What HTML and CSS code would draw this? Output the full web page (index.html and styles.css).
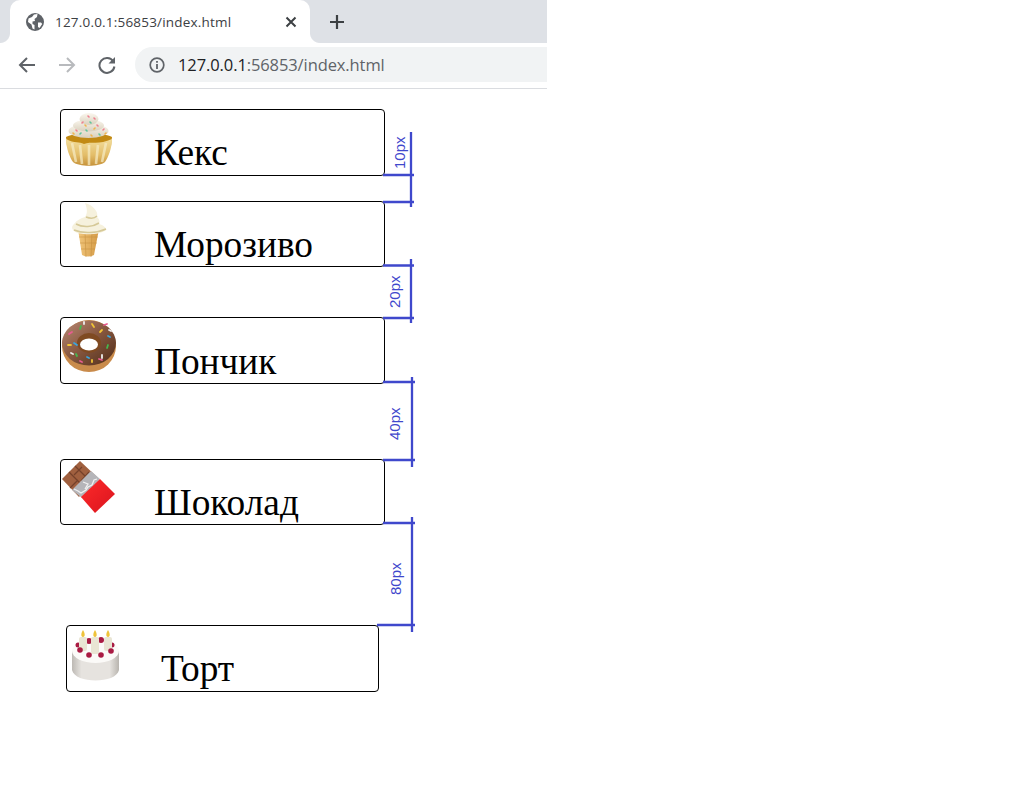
FILE: index.html
```html
<!DOCTYPE html>
<html lang="uk">
<head>
<meta charset="utf-8">
<title>index.html</title>
<link rel="stylesheet" href="styles.css">
</head>
<body>
<div class="page">
  <header class="browser">
    <div class="tabstrip">
      <div class="tab">
        <svg class="globe" width="18" height="18" viewBox="0 0 18 18"><circle cx="9" cy="9" r="9" fill="#5f6368"/><path d="M2.5 5.5 L6 4 L8 1.5 L11.5 1 L11 4 L8.5 6 L9 8 L6.5 8.5 L6.5 11 L8.5 12 L8.5 16.5 L6.5 15.5 L5.5 11.5 L2 9 Z M12 9.5 L15 9.5 L16.2 11 L13.5 15 L12 14 Z" fill="#fff"/></svg>
        <span class="tab-title">127.0.0.1:56853/index.html</span>
        <svg class="close" width="12" height="12" viewBox="0 0 12 12"><path d="M1.5 1.5 L10.5 10.5 M10.5 1.5 L1.5 10.5" stroke="#3c4043" stroke-width="2"/></svg>
      </div>
      <svg class="newtab" width="16" height="16" viewBox="0 0 16 16"><path d="M8 1 V15 M1 8 H15" stroke="#3c4043" stroke-width="2.2"/></svg>
    </div>
    <div class="toolbar">
      <svg class="nav" width="18" height="18" viewBox="0 0 18 18"><path d="M17 9 H2 M9 2 L2 9 L9 16" fill="none" stroke="#5f6368" stroke-width="2"/></svg>
      <svg class="nav nav-fwd" width="18" height="18" viewBox="0 0 18 18"><path d="M1 9 H16 M9 2 L16 9 L9 16" fill="none" stroke="#b8babd" stroke-width="2"/></svg>
      <svg class="nav nav-reload" width="18" height="18" viewBox="0 0 18 18"><path d="M15.2 5.2 A7.5 7.5 0 1 0 16.4 10.5" fill="none" stroke="#5f6368" stroke-width="2"/><path d="M17 1 V7.5 H10.5 Z" fill="#5f6368"/></svg>
      <div class="omnibox">
        <svg class="info" width="16" height="16" viewBox="0 0 16 16"><circle cx="8" cy="8" r="6.8" fill="none" stroke="#5f6368" stroke-width="1.7"/><path d="M8 7 V12 M8 4 V5.8" stroke="#5f6368" stroke-width="1.8"/></svg>
        <span class="url"><span class="url-host">127.0.0.1</span>:56853/index.html</span>
      </div>
    </div>
  </header>

  <main class="list">
    <div class="card card-a">
      <svg class="emoji" viewBox="0 0 64 65" width="64" height="65">
        <defs>
          <linearGradient id="wrap" x1="0" y1="0" x2="0" y2="1"><stop offset="0" stop-color="#f2dd9c"/><stop offset=".6" stop-color="#e3bd68"/><stop offset="1" stop-color="#c6923a"/></linearGradient>
          <linearGradient id="frost" x1="0" y1="0" x2="0" y2="1"><stop offset="0" stop-color="#fbf7ee"/><stop offset="1" stop-color="#d9d0bd"/></linearGradient>
        </defs>
        <path d="M5 27 C16 22 40 22 51 27 L50 36 L6 36 Z" fill="#c28a14"/>
        <ellipse cx="27.500" cy="21" rx="20" ry="7" fill="url(#frost)"/>
        <ellipse cx="27.500" cy="15.500" rx="15.500" ry="6" fill="url(#frost)"/>
        <ellipse cx="28" cy="9" rx="9.500" ry="6" fill="url(#frost)"/>
        <path d="M5 29 C14 34 18 31 23 34 C30 31 38 35 51 29 C51 38 47 48 44 52 C38 57 18 57 12 52 C9 48 5 38 5 29 Z" fill="url(#wrap)"/>
        <path d="M11 33 L15 52 M19 35 L21 54 M28 35 V55 M37 35 L35 54 M45 33 L41 52" stroke="#f7edc6" stroke-width="2.600" opacity=".7"/>
        <g stroke-width="1.600" stroke-linecap="round">
          <path d="M27 6 l1 1 M33 8 l1 1 M21 13 l1 -1 M36 15 l1 1 M15 20 l1 1 M42 20 l1 -1" stroke="#ef7f8f"/>
          <path d="M29 12 l1 1 M19 24 l1 -1 M38 24 l1 1 M25 20 l1 1" stroke="#5fc49b"/>
          <path d="M24 15 l1 1 M33 19 l1 -1 M12 23 l1 1 M30 25 l1 1 M44 24 l1 -1" stroke="#f0b44c"/>
        </g>
      </svg>
      <span class="label">Кекс</span>
    </div>

    <div class="card card-b">
      <svg class="emoji" viewBox="0 0 64 65" width="64" height="65">
        <defs><linearGradient id="cone" x1="0" y1="0" x2="1" y2="0"><stop offset="0" stop-color="#f1c67c"/><stop offset="1" stop-color="#d49a45"/></linearGradient></defs>
        <path d="M17 27 L38 27 L33 53 Q27 56 21 53 Z" fill="url(#cone)"/>
        <path d="M18 35 H37 M19 41 H36 M20 47 H34 M24 30 L25 55 M31 30 L30 55" stroke="#c08a3a" stroke-width=".7" opacity=".7"/>
        <path d="M24 1 C32 3 38 10 36 15 C39 18 39 20 38 22 C42 23 46 26 45 28 C40 33 18 34 13 29 C10 26 11 24 13 22 C16 18 20 16 24 15 C27 11 26 6 24 1 Z" fill="#f6f1dd"/>
        <path d="M25 15 C30 17 34 16 36 14 M15 22 C22 26 32 25 38 21 M13 28 C22 32 36 31 45 27" fill="none" stroke="#d6c998" stroke-width="1.600"/>
      </svg>
      <span class="label">Морозиво</span>
    </div>

    <div class="card card-c">
      <svg class="emoji" viewBox="0 0 64 65" width="64" height="65">
        <defs><linearGradient id="icing" x1="0" y1="0" x2="1" y2="1"><stop offset="0" stop-color="#b98a76"/><stop offset=".45" stop-color="#8a5a42"/><stop offset="1" stop-color="#4f2c18"/></linearGradient></defs>
        <ellipse cx="28" cy="28" rx="27" ry="26" fill="#c98b4b"/>
        <ellipse cx="28" cy="25" rx="27" ry="22.500" fill="url(#icing)"/>
        <ellipse cx="28" cy="25" rx="12" ry="10" fill="#7f4a22"/>
        <ellipse cx="28" cy="26.500" rx="9" ry="6" fill="#fff"/>
        <g stroke-width="1.800" stroke-linecap="round">
          <path d="M8 16 l3 -2 M38 41 l3 1 M19 43 l2 1 M43 7 l3 -1" stroke="#e85c90"/>
          <path d="M20 8 l-1 3 M46 30 l1 -3 M16 38 l-1 -2" stroke="#45b74e"/>
          <path d="M31 6 l2 3 M7 27 l3 0 M39 14 l2 -2 M31 42 l0 2" stroke="#f1c435"/>
          <path d="M13 25 l3 2 M47 18 l2 1 M26 39 l2 1" stroke="#3aa6dc"/>
          <path d="M23 4 l0 2 M10 35 l2 1 M41 37 l0 3 M48 12 l2 1" stroke="#eee"/>
        </g>
      </svg>
      <span class="label">Пончик</span>
    </div>

    <div class="card card-d">
      <svg class="emoji" viewBox="0 0 64 65" width="64" height="65">
        <defs><linearGradient id="red" x1="0" y1="0" x2="1" y2="1"><stop offset="0" stop-color="#ff2a2a"/><stop offset="1" stop-color="#d9141e"/></linearGradient></defs>
        <path d="M19 1 L36 17 L18 37 L1 19 Z" fill="#a0603f"/>
        <path d="M14 6 L31 23 M8 12 L25 29 M20 21 L28 12 M13 15 L21 7 M9 28 L17 20" stroke="#74412a" stroke-width="1.200"/>
        <path d="M30 11 L39 19 L21 38 L11 30 Z" fill="#b5b5b9"/>
        <path d="M13 29 L17 31 L20 33 L25 30 L27 27 L31 25 L33 20 L36 19 M22 22 L27 24 L24 29" fill="none" stroke="#f0f0f0" stroke-width="1.300"/>
        <path d="M39 19 L54 34 L34 53 L20 37 Z" fill="url(#red)"/>
      </svg>
      <span class="label">Шоколад</span>
    </div>

    <div class="card card-e">
      <svg class="emoji" viewBox="0 0 64 65" width="64" height="65">
        <defs><linearGradient id="cakeside" x1="0" y1="0" x2="1" y2="0"><stop offset="0" stop-color="#bdb9b4"/><stop offset=".2" stop-color="#e6e3df"/><stop offset=".8" stop-color="#e6e3df"/><stop offset="1" stop-color="#b8b4ae"/></linearGradient></defs>
        <path d="M5 25 V44 C8 58 49 58 52 44 V25 Z" fill="url(#cakeside)"/>
        <ellipse cx="28.500" cy="25" rx="23.500" ry="12" fill="#fbfaf8"/>
        <g fill="#a91b43">
          <circle cx="11" cy="19" r="2.500"/><circle cx="22" cy="15" r="3"/><circle cx="34" cy="14" r="3"/><circle cx="45" cy="19" r="2.500"/>
        </g>
        <g fill="#e9e5d4">
          <rect x="12" y="11" width="8" height="14" rx="2"/><rect x="24" y="11" width="8" height="17" rx="2"/><rect x="37" y="11" width="8" height="14" rx="2"/>
        </g>
        <g fill="#eec33a">
          <path d="M16 4 C18 7 18.500 11 16 11 C13.500 11 14 7 16 4Z"/><path d="M28 4 C30 7 30.500 11 28 11 C25.500 11 26 7 28 4Z"/><path d="M41 4 C43 7 43.500 11 41 11 C38.500 11 39 7 41 4Z"/>
        </g>
        <g fill="#a91b43">
          <circle cx="13" cy="24" r="2.800"/><circle cx="22" cy="29" r="2.800"/><circle cx="34" cy="29" r="2.800"/><circle cx="44" cy="25" r="2.800"/>
        </g>
      </svg>
      <span class="label">Торт</span>
    </div>
  </main>

  <svg class="marks" width="100" height="520" viewBox="370 125 100 520">
    <g class="mark-lines">
      <path d="M411 132 V207 M383 175 H414 M383 202 H414"/>
      <path d="M411 259 V323 M383 265.500 H414 M383 318 H414"/>
      <path d="M412 377 V467 M383 382 H415 M383 460 H415"/>
      <path d="M412 517 V632 M383 523 H415 M377 625 H415"/>
    </g>
    <text class="mark-text" transform="translate(405 169) rotate(-90)">10px</text>
    <text class="mark-text" transform="translate(400 308) rotate(-90)">20px</text>
    <text class="mark-text" transform="translate(400 440) rotate(-90)">40px</text>
    <text class="mark-text" transform="translate(401 595) rotate(-90)">80px</text>
  </svg>
</div>
</body>
</html>
```

FILE: styles.css
```css
* { box-sizing: border-box; }
html, body { margin: 0; padding: 0; background: #fff; }
.page { position: relative; width: 1033px; height: 787px; overflow: hidden; }

.browser { width: 547px; height: 89px; font-family: "Open Sans", "Liberation Sans", sans-serif; }
.tabstrip { height: 43px; background: #dee1e6; display: flex; align-items: center; padding-left: 10px; }
.tab {
  position: relative;
  width: 300px; height: 43px; background: #fff; border-radius: 10px 10px 0 0;
  display: flex; align-items: center; padding: 0 13px 0 16px;
}
.tab::before, .tab::after {
  content: ""; position: absolute; bottom: 0; width: 10px; height: 10px;
}
.tab::before {
  left: -10px;
  background: radial-gradient(circle at 0 0, #dee1e6 9.5px, #fff 10.5px);
}
.tab::after {
  right: -10px;
  background: radial-gradient(circle at 100% 0, #dee1e6 9.5px, #fff 10.5px);
}
.tab-title { font-size: 13.5px; color: #3c4043; margin-left: 11px; flex: 1; letter-spacing: 0.2px; }
.newtab { margin-left: 19px; }

.toolbar {
  height: 46px; background: #fff; border-bottom: 1px solid #dadce0;
  display: flex; align-items: center; padding: 0 0 2px 18px;
}
.nav { margin-right: 22px; flex: none; }
.nav-reload { margin-right: 19px; }
.omnibox {
  flex: 1; height: 35px; background: #f1f3f4; border-radius: 17.5px 0 0 17.5px;
  display: flex; align-items: center; padding-left: 14px;
}
.url { margin-left: 13px; font-size: 16.5px; color: #5f6368; letter-spacing: -0.1px; }
.url-host { color: #202124; }

.list { padding-top: 20px; }
.card {
  height: 67px; margin: 0 0 0 60px; width: 325px;
  border: 1px solid #000; border-radius: 4px; background: #fff;
  display: flex; align-items: flex-end; padding-bottom: 1px;
}
.card-a { padding-bottom: 2px; }
.card-b { height: 66px; margin-top: 25px; }
.card-c { margin-top: 50px; }
.card-d { height: 66px; margin-top: 75px; }
.card-e { margin-top: 100px; margin-left: 66px; width: 313px; padding-bottom: 2px; }
.emoji { flex: none; align-self: flex-start; filter: blur(0.35px); }
.label {
  margin-left: 29px; font-family: "Liberation Serif", "Times New Roman", serif;
  font-size: 37.33px; line-height: 41px; color: #000;
}
.card-e .label { margin-left: 30px; }

.marks { position: absolute; left: 370px; top: 125px; }
.mark-lines path { fill: none; stroke: #3f48cc; stroke-width: 2.3; }
.mark-text { font-family: "Liberation Sans", Arial, sans-serif; font-size: 15px; fill: #3f48cc; }
```
